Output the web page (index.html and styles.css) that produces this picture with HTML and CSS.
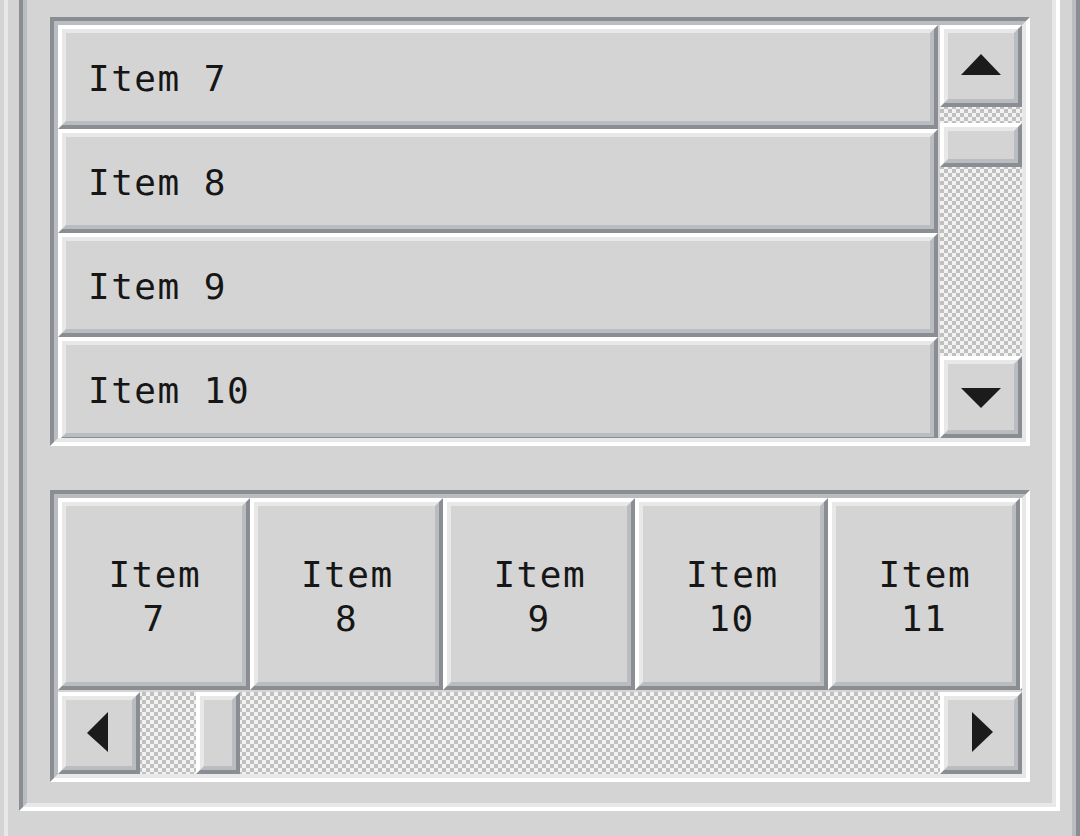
FILE: index.html
```html
<!DOCTYPE html>
<html>
<head>
<meta charset="utf-8">
<link rel="stylesheet" href="styles.css">
</head>
<body>
<div class="panel">
  <div class="sunken well">
    <div class="sunken frame frame-list">
      <div class="listbox">
        <div class="raised item">Item 7</div>
        <div class="raised item">Item 8</div>
        <div class="raised item">Item 9</div>
        <div class="raised item">Item 10</div>
      </div>
      <div class="vscroll trough">
        <div class="raised arrow">
          <svg viewBox="0 0 66 66" width="66" height="66"><polygon points="13,42 33,21 53,42"/></svg>
        </div>
        <div class="gap-v1"></div>
        <div class="raised thumb-v"></div>
        <div class="fill"></div>
        <div class="raised arrow">
          <svg viewBox="0 0 66 66" width="66" height="66"><polygon points="13,24 33,44 53,24"/></svg>
        </div>
      </div>
    </div>
    <div class="sunken frame frame-row">
      <div class="tiles">
        <div class="raised tile w192">Item<br>7</div>
        <div class="raised tile w193">Item<br>8</div>
        <div class="raised tile w192">Item<br>9</div>
        <div class="raised tile w193">Item<br>10</div>
        <div class="raised tile w192">Item<br>11</div>
        <div class="raised tile w193"></div>
      </div>
      <div class="hscroll trough">
        <div class="raised arrow">
          <svg viewBox="0 0 66 66" width="66" height="66"><polygon points="21,33 42,12 42,52"/></svg>
        </div>
        <div class="gap-h1"></div>
        <div class="raised thumb-h"></div>
        <div class="fill"></div>
        <div class="raised arrow">
          <svg viewBox="0 0 66 66" width="66" height="66"><polygon points="24,12 24,52 45,32"/></svg>
        </div>
      </div>
    </div>
  </div>
</div>
</body>
</html>
```

FILE: styles.css
```css
* { box-sizing: border-box; }

html, body {
  margin: 0;
  padding: 0;
}

body {
  width: 1080px;
  height: 836px;
  overflow: hidden;
  background: #d4d4d4;
  font-family: "DejaVu Sans Mono", "Liberation Mono", monospace;
  color: #161616;
}

/* 3D bevels: outer ring is the border, inner ring the ::before */
.raised, .sunken, .panel {
  position: relative;
  border: 4px solid;
  padding: 4px;
}
.raised::before, .sunken::before, .panel::before {
  content: "";
  position: absolute;
  inset: 0;
  border: 4px solid;
  pointer-events: none;
}

.raised {
  background: #d4d4d4;
  border-color: #ffffff #8a8d91 #8a8d91 #ffffff;
}
.raised::before {
  border-color: #e8e8e8 #b9bcc0 #b9bcc0 #e8e8e8;
}

.sunken {
  border-color: #8a8d91 #ffffff #ffffff #8a8d91;
}
.sunken::before {
  border-color: #b9bcc0 #e8e8e8 #e8e8e8 #b9bcc0;
}

.panel {
  margin-top: -40px;
  width: 1080px;
  height: 940px;
  border-color: #d4d4d4 #8a8d91 #8a8d91 #d4d4d4;
  padding: 16px 16px 0 15px;
}
.panel::before {
  border-color: #e8e8e8 #b9bcc0 #b9bcc0 #e8e8e8;
}

.well {
  width: 1041px;
  height: 831px;
  padding: 33px 26px 25px 27px;
  display: flex;
  flex-direction: column;
  gap: 44px;
}

.frame {
  width: 980px;
  display: flex;
  overflow: hidden;
}

.frame-list {
  height: 429px;
  flex-direction: row;
}

.frame-row {
  height: 292px;
  flex-direction: column;
}

/* vertical list */
.listbox {
  width: 880px;
  height: 413px;
  overflow: hidden;
  display: flex;
  flex-direction: column;
}

.item {
  flex: 0 0 104px;
  height: 104px;
  display: flex;
  align-items: center;
  padding-left: 26px;
  padding-top: 7px;
  font-size: 36px;
  letter-spacing: 1.5px;
  white-space: pre;
}

/* scrollbars */
.trough {
  background-color: #f2f2f2;
  background-image: repeating-conic-gradient(#c0c0c0 0 25%, #f2f2f2 0 50%);
  background-size: 8px 8px;
  display: flex;
}

.vscroll {
  width: 82px;
  height: 413px;
  margin-left: 2px;
  flex-direction: column;
}

.hscroll {
  width: 964px;
  height: 82px;
  margin-top: 2px;
  flex-direction: row;
}

.arrow {
  flex: 0 0 82px;
  width: 82px;
  height: 82px;
  padding: 4px;
}
.arrow svg {
  display: block;
  fill: #1b1b1b;
}

.gap-v1 { flex: 0 0 16px; }
.gap-h1 { flex: 0 0 56px; }
.fill { flex: 1 1 auto; }

.thumb-v {
  flex: 0 0 44px;
  width: 82px;
}
.thumb-h {
  flex: 0 0 44px;
  height: 82px;
}

/* horizontal tiles */
.tiles {
  display: flex;
  width: 964px;
  height: 192px;
  overflow: hidden;
}

.tile {
  flex: 0 0 auto;
  height: 192px;
  display: flex;
  align-items: center;
  justify-content: center;
  text-align: center;
  font-size: 36px;
  letter-spacing: 1.5px;
  text-indent: 1.5px;
  line-height: 44px;
  padding-top: 10px;
}
.w192 { width: 192px; }
.w193 { width: 193px; }
```
